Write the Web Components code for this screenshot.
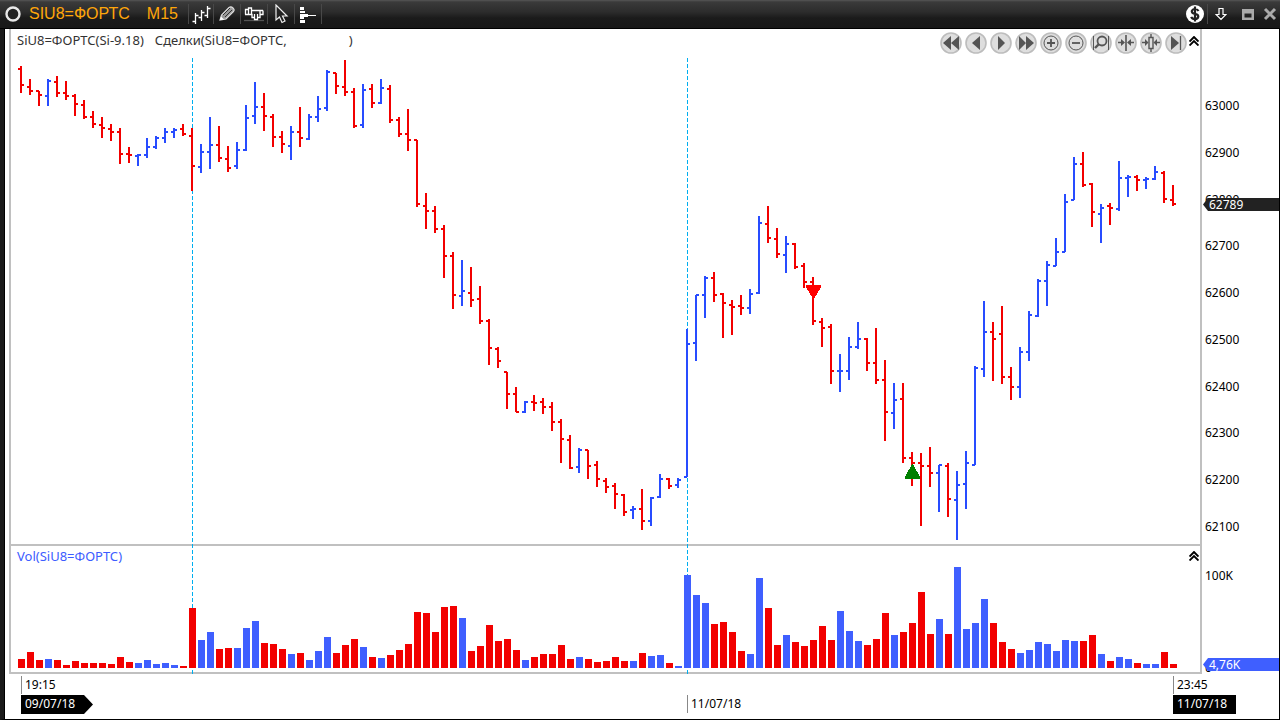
<!DOCTYPE html>
<html lang="ru">
<head>
<meta charset="utf-8">
<title>SIU8=ФОРТС M15</title>
<style>
body { margin: 0; font: 12px/16px "Noto Sans", "Open Sans", sans-serif; color: #000; background: #fff; }
</style>
</head>
<body>
<chart-window></chart-window>
<script>
const define = (name, html, setup) => {
  const template = document.createElement('template');
  template.innerHTML = html;
  customElements.define(name, class extends HTMLElement {
    constructor() {
      super();
      this.attachShadow({ mode: 'open' }).append(template.content.cloneNode(true));
    }
    connectedCallback() { if (setup) setup(this, this.shadowRoot); }
  });
};

/* direction, high, low, open, close (vertical canvas units), volume height */
const BARS = `R 66 93 68 84 9|R 79 95 86 90 16|R 91 106 90 94 8|B 79 106 95 80 9|R 76 97 81 92 8|R 81 100 92 95 3|R 94 116 95 103 7|R 100 119 104 116 5|R 111 128 116 123 5|R 117 138 124 127 5|R 124 141 128 131 4|R 128 164 131 153 11|R 147 163 153 154 6|B 154 166 155 154 5|B 138 158 154 146 8|B 136 149 146 137 4|B 128 143 137 131 5|B 128 138 131 129 3|R 124 136 128 133 2|R 128 191 135 165 60|B 144 173 166 151 28|B 117 169 151 144 36|R 126 162 144 157 19|R 146 172 158 167 20|B 142 169 165 149 20|B 105 151 149 117 40|B 82 124 115 106 47|R 93 131 106 115 25|R 114 147 116 136 24|R 131 153 136 143 19|B 126 160 145 131 14|R 107 147 131 137 15|B 114 140 138 116 8|B 96 122 116 108 17|B 70 111 107 71 31|R 73 94 72 85 15|R 60 96 86 91 23|R 88 128 91 125 29|B 84 128 124 89 21|R 84 108 88 102 11|B 79 104 102 87 10|R 85 123 88 119 13|R 117 137 119 133 18|R 109 151 133 139 24|R 140 207 139 203 56|R 193 229 205 210 55|R 206 233 210 228 36|R 225 278 228 255 61|R 252 309 255 294 62|B 260 306 295 290 50|R 267 307 292 299 17|R 286 324 298 320 22|R 319 365 320 347 43|R 347 368 348 360 27|R 372 409 371 393 29|R 387 412 393 411 18|B 401 413 411 401 8|R 395 411 401 402 11|R 398 414 401 406 14|R 402 431 406 421 14|R 419 463 421 438 23|R 435 469 439 467 9|B 448 473 466 449 11|R 450 479 449 465 9|R 461 487 464 478 6|R 478 493 480 486 7|R 483 509 485 493 11|R 494 516 494 511 7|B 506 519 509 508 7|R 489 530 508 520 15|B 497 526 520 497 12|B 474 498 496 478 13|R 478 489 478 485 5|B 478 488 484 479 2|B 329 477 476 343 93|B 295 361 342 294 73|B 276 318 294 277 65|R 272 302 277 294 44|R 293 338 293 302 46|R 300 335 304 306 36|R 295 315 305 307 17|B 289 314 307 293 14|B 216 294 292 222 90|R 206 243 223 237 60|R 228 258 238 253 23|B 236 273 254 243 33|R 243 269 243 266 26|R 263 288 265 281 22|R 277 325 281 320 28|R 318 347 321 327 42|R 324 384 326 370 28|B 354 392 370 370 57|B 337 380 370 346 37|B 322 349 346 338 27|R 338 371 338 362 23|R 328 384 362 379 29|R 360 441 379 411 55|B 383 429 412 399 33|R 383 463 398 457 36|R 452 486 457 462 45|R 453 526 462 465 76|R 447 487 465 472 34|B 465 512 472 464 49|R 463 517 465 498 34|B 471 540 499 484 101|B 451 509 483 462 39|B 366 465 464 367 45|B 301 377 368 331 69|R 322 381 331 338 45|R 306 384 333 376 26|R 367 400 376 386 19|B 347 398 386 351 15|B 311 361 351 314 18|B 279 317 315 280 26|B 261 306 280 264 24|B 238 266 265 251 17|B 194 252 251 201 28|B 157 200 199 163 27|R 152 187 163 184 27|R 183 227 183 211 33|B 204 243 213 207 14|R 203 225 205 207 7|B 161 211 208 177 11|B 175 197 177 176 9|R 175 191 176 179 5|B 177 189 179 178 4|B 166 180 178 171 4|R 171 203 172 198 16|R 185 206 199 203 4`
  .split('|').map(row => {
    const [side, ...n] = row.split(' ');
    const [high, low, open, close, volume] = n.map(Number);
    return { side, high, low, open, close, volume };
  });
const STEP = 9;
const rect = (x, y, w, h, fill) => `<rect x="${x}" y="${y}" width="${w}" height="${h}" fill="${fill}"/>`;
const session = (x, y1, y2) =>
  `<path d="M${x}.5 ${y1}V${y2}" stroke="#00aeef" stroke-dasharray="4 2" fill="none"/>`;

/* Toolbar button with a drawn icon */
define('tool-button', `
<style>
:host { display: flex; }
button { display: flex; align-items: center; justify-content: center; width: 100%; padding: 0; border: 0; background: none; color: inherit; }
</style>
<button type="button"><slot></slot></button>`, (el, root) => {
  root.querySelector('button').setAttribute('aria-label', el.getAttribute('label'));
});

define('title-bar', `
<style>
:host { display: flex; align-items: center; height: 28px; border-bottom: 1px solid #000;
  background: linear-gradient(#565656 0, #3a3a3a 2px, #2c2c2c 12px, #1b1b1b 18px, #181818); color: #fff; }
h1, .tf { margin: 0; font: 16px/24px "Liberation Sans", sans-serif; color: #ffa60a; white-space: nowrap; }
h1 { margin-left: 8px; }
.tf { width: 41px; margin-left: 17px; }
.ring { width: 16px; margin-left: 5px; }
.tools { display: flex; border-left: 1px solid #484848; }
.tools tool-button { width: 26px; height: 20px; border-right: 1px solid #484848; }
.tools tool-button:first-child { width: 24px; }
.space { flex: 1; }
.money { width: 20px; padding-right: 2px; border-right: 1px solid #484848; height: 20px; }
.down { width: 26px; }
.min { width: 27px; }
.close { width: 18px; margin-right: 1px; }
svg { display: block; }
</style>
<tool-button class="ring" label="Связь"><svg width="16" height="16"><circle cx="8" cy="8" r="6.500" fill="#222" stroke="#e8e8e8" stroke-width="2.400"/></svg></tool-button>
<h1>SIU8=ФОРТС</h1><span class="tf">M15</span>
<div class="tools">
<tool-button label="Тип графика"><svg width="20" height="20" stroke="#fff" stroke-width="1.300" fill="none"><path d="M4.500 9v11M1.500 17.500h3M4.500 11.500h3M10.500 6v11M7.500 13.500h3M10.500 8.500h3M16.500 2v12M13.500 11.500h3M16.500 4.500h3"/></svg></tool-button>
<tool-button label="Рисование"><svg width="18" height="18"><path d="M2 15l1.500-5L11 2.500Q13 1 15 3t0.500 3.500L8 14z" fill="#999" stroke="#ddd" stroke-width="1.100"/><path d="M2 15l1-3.500 3 3z" fill="#fff"/><path d="M5 10l7-7M7 12l7-7" stroke="#333"/></svg></tool-button>
<tool-button label="Объём"><svg width="20" height="16" fill="none" stroke="#fff" stroke-width="1.300"><path d="M0 14.500h20" stroke="#555"/><path d="M1.500 8.500v-5h3v5M4.500 3.500v-1.500h3v6.500M1 8.500h7v3h2.500v2h3v-2h2.500v-3h3v-4M10.500 8v4M13.500 8v4M16 5v4M8 4.500h11"/></svg></tool-button>
<tool-button label="Курсор"><svg width="16" height="20"><path d="M3 1v15l3.500-3 2.500 5.500 3-1.500-2.500-5h4.500z" fill="#222" stroke="#eee" stroke-width="1.200"/></svg></tool-button>
<tool-button label="Профиль"><svg width="18" height="18" fill="#fff"><path d="M1 2h4v3H1zM1 6h5v2H1zM1 9h8v3H1zM1 12h4v2H1zM1 15h5v3H1zM8 10h9v1H8z"/></svg></tool-button>
</div>
<span class="space"></span>
<tool-button class="money" label="Торговля"><svg width="18" height="18" viewBox="0 0 18 18"><circle cx="9" cy="9" r="9" fill="#fff"/><path d="M12.500 6Q11.500 4 9 4T5.800 6.200Q5.800 8.300 9 8.800T12.300 11.500Q12 14 9 14T5.200 11.800M9 1.500v15" fill="none" stroke="#222" stroke-width="2.200"/></svg></tool-button>
<tool-button class="down" label="Закрепить"><svg width="12" height="15"><path d="M4 1.500h4v6h3L6 12.500 1 7.500h3z" fill="none" stroke="#fff" stroke-width="1.200"/></svg></tool-button>
<tool-button class="min" label="Свернуть"><svg width="14" height="14"><path fill-rule="evenodd" d="M1 2h12v11H1zM3.500 6.500v4h7v-4z" fill="#aaa"/></svg></tool-button>
<tool-button class="close" label="Закрыть"><svg width="14" height="14"><path d="M2 2l10 10M12 2L2 12" stroke="#aaa" stroke-width="3"/></svg></tool-button>
`);

/* Row of round navigation buttons */
const NAV = [
  ['В начало', '<path d="M3 11l8-7v14zM11 11l8-7v14z" fill="#555" stroke="none"/>'],
  ['Назад', '<path d="M7 11l8-7v14z" fill="#555" stroke="none"/>'],
  ['Вперёд', '<path d="M15 11L8 4v14z" fill="#555" stroke="none"/>'],
  ['В конец', '<path d="M11 11L4 4v14zM19 11l-8-7v14z" fill="#555" stroke="none"/>'],
  ['Увеличить', '<circle cx="11" cy="11" r="7"/><path d="M7 11h8M11 7v8" stroke-width="1.800"/>'],
  ['Уменьшить', '<circle cx="11" cy="11" r="7"/><path d="M7 11h8" stroke-width="1.800"/>'],
  ['Масштаб', '<circle cx="12" cy="9" r="4.500" stroke-width="1.800"/><path d="M9 12l-4 4" stroke-width="2.400"/><path d="M3.500 4v14M18.500 4v14"/>'],
  ['Сжать', '<path d="M11 3v16M3 10.500h5M19 10.500h-5" stroke-width="1.600"/><path d="M10 10.500L6 7v7zM12 10.500L16 7v7z" fill="#555" stroke="none"/>'],
  ['Ширина баров', '<path d="M9 5.500h4v11H9zM11 2v3M11 17v3M2 10.500h4M20 10.500h-4" stroke-width="1.400"/><path d="M8.500 10.500L5 7v7zM13.500 10.500L17 7v7z" fill="#555" stroke="none"/>'],
  ['К последней', '<path d="M14 11L6 4v14z" fill="#555" stroke="none"/><path d="M15.500 4v14" stroke-width="1.300"/>'],
];
define('nav-strip', `
<style>
:host { display: flex; align-items: flex-start; }
tool-button { width: 25px; }
.fold { width: 12px; margin: 4px 0 0; }
svg { display: block; }
</style>`, (el, root) => {
  root.innerHTML += NAV.map(([label, art]) =>
    `<tool-button label="${label}"><svg width="22" height="22" fill="none" stroke="#555"><circle cx="11" cy="11" r="10" fill="#dedede" stroke="#bdbdbd" stroke-width="1.600"/>${art}</svg></tool-button>`
  ).join('') + '<fold-button class="fold"></fold-button>';
});
define('fold-button', `
<style>:host { display: flex; } svg { display: block; } tool-button { width: 12px; }</style>
<tool-button label="Свернуть панель"><svg width="10" height="10" fill="none" stroke="#000" stroke-width="1.900"><path d="M.5 5.500L5 1l4.500 4.500M.5 9.500L5 5l4.500 4.500"/></svg></tool-button>`);

define('price-pane', `
<style>
:host { display: block; position: relative; min-height: 0; }
svg { display: block; position: absolute; width: 100%; height: 100%; }
.legend { position: absolute; left: 6px; top: 3px; display: flex; font-size: 13px; color: #333; white-space: pre; }
.legend span { margin-right: 11px; }
.legend .gap { margin-right: 62px; }
nav-strip { position: absolute; right: 0; top: 3px; }
</style>
<svg viewBox="11 29 1189 515" preserveAspectRatio="none" shape-rendering="crispEdges" role="img" aria-label="Цена"></svg>
<div class="legend"><span>SiU8=ФОРТС(Si-9.18)</span><span class="gap">Сделки(SiU8=ФОРТС,</span><span>)</span></div>
<nav-strip></nav-strip>`, (el, root) => {
  let art = session(192, 58, 544) + session(687, 58, 544);
  BARS.forEach((b, i) => {
    const x = 20 + STEP * i, ink = b.side === 'R' ? '#f20000' : '#284cff';
    art += rect(x, b.high, 2, b.low - b.high, ink) + rect(x - 2, b.open, 3, 2, ink) + rect(x + 1, b.close, 3, 2, ink);
  });
  art += '<path d="M806 285h15v2l-7 12h-1l-7-12z" fill="#f00"/><path d="M912 464h1l7 13v2h-15v-2z" fill="#008000"/>';
  root.querySelector('svg').innerHTML = art;
});

define('volume-pane', `
<style>
:host { display: block; position: relative; }
svg { display: block; position: absolute; width: 100%; height: 100%; }
.legend { position: absolute; left: 6px; top: 4px; font-size: 13px; color: #3c5cff; }
fold-button { position: absolute; right: 0; top: 7px; }
</style>
<svg viewBox="11 544 1189 130" preserveAspectRatio="none" shape-rendering="crispEdges" role="img" aria-label="Объём"></svg>
<span class="legend">Vol(SiU8=ФОРТС)</span><fold-button></fold-button>`, (el, root) => {
  let art = rect(11, 544, 1189, 2, '#c0c0c0') + rect(11, 672, 1189, 2, '#c0c0c0') + session(192, 544, 674) + session(687, 544, 674);
  BARS.forEach((b, i) => { art += rect(18 + STEP * i, 668 - b.volume, 7, b.volume, b.side === 'R' ? '#f20000' : '#3f5fff'); });
  root.querySelector('svg').innerHTML = art;
});

/* Pointer-shaped value marker on an axis */
define('value-tag', `
<style>
:host { display: block; box-sizing: border-box; height: 13px; line-height: 13px; padding-left: 6px; color: #fff; background: var(--tag, #222);
  clip-path: polygon(0 50%, 5px 0, 100% 0, 100% 100%, 5px 100%); }
</style><slot></slot>`);

define('price-axis', `
<style>
:host { display: flex; flex-direction: column; justify-content: space-between; position: relative; box-sizing: border-box; padding: 69px 0 9px 3px; }
value-tag { position: absolute; left: 1px; right: 0; top: 169px; }
</style>
<span>63000</span><span>62900</span><span>62800</span><span>62700</span><span>62600</span><span>62500</span><span>62400</span><span>62300</span><span>62200</span><span>62100</span>
<value-tag>62789</value-tag>`);

define('volume-axis', `
<style>
:host { display: flex; flex-direction: column; justify-content: space-between; position: relative; box-sizing: border-box; padding: 24px 0 0 3px; height: 132px; }
value-tag { --tag: #3f5fff; position: absolute; left: 1px; right: 0; top: 114px; }
</style>
<span>100K</span><span>0</span><value-tag>4,76K</value-tag>`);

define('time-mark', `
<style>
:host { display: flex; flex-direction: column; align-items: flex-start; white-space: nowrap; padding-top: 2px; }
.time { display: block; box-sizing: border-box; height: 18px; line-height: 18px; border-left: 1px solid #888; padding-left: 3px; }
.time.blank { border-color: transparent; }
.date { box-sizing: border-box; margin-top: 1px; height: 19px; line-height: 18px; padding-left: 4px; }
:host([kind="start"]) .date, :host([kind="end"]) .date { background: #000; color: #fff; }
:host([kind="start"]) .date { width: 72px; clip-path: polygon(0 0, 63px 0, 100% 50%, 63px 100%, 0 100%); }
:host([kind="end"]) .date { width: 63px; }
:host([kind="mid"]) .date { border-left: 1px solid #888; padding-left: 3px; height: 18px; }
</style>
<span class="time"><slot name="time"></slot></span><span class="date"><slot></slot></span>`, (el, root) => {
  if (el.getAttribute('kind') === 'mid') root.querySelector('.time').classList.add('blank');
});

define('time-axis', `
<style>
:host { display: grid; grid-template-columns: minmax(0, 10fr) minmax(0, 666fr) minmax(0, 486fr) minmax(0, 27fr); }
</style>
<i></i>
<time-mark kind="start"><time slot="time">19:15</time>09/07/18</time-mark>
<time-mark kind="mid">11/07/18</time-mark>
<time-mark kind="end"><time slot="time">23:45</time>11/07/18</time-mark>`);

define('chart-window', `
<style>
:host { display: flex; flex-direction: column; height: 100vh; min-height: 480px; }
main { flex: 1; display: grid; min-height: 0; box-sizing: border-box;
  grid-template: minmax(0, 1fr) 130px 45px / 2px minmax(0, 1fr) 2px 77px;
  padding-left: 5px; border-left: 4px solid #1a1a1a; border-right: 1px solid #000; border-bottom: 1px solid #000; box-shadow: inset 1px 0 #000; }
.rule { background: #c0c0c0; grid-row: 1 / 3; }
.left { grid-column: 1; }
.right { grid-column: 3; }
price-pane { grid-area: 1 / 2; }
volume-pane { grid-area: 2 / 2; }
price-axis { grid-area: 1 / 4; }
volume-axis { grid-area: 2 / 4; }
time-axis { grid-area: 3 / 2; }
</style>
<title-bar></title-bar>
<main>
<span class="rule left"></span><price-pane></price-pane><span class="rule right"></span><price-axis></price-axis>
<volume-pane></volume-pane><volume-axis></volume-axis><time-axis></time-axis>
</main>`);
</script>
</body>
</html>
